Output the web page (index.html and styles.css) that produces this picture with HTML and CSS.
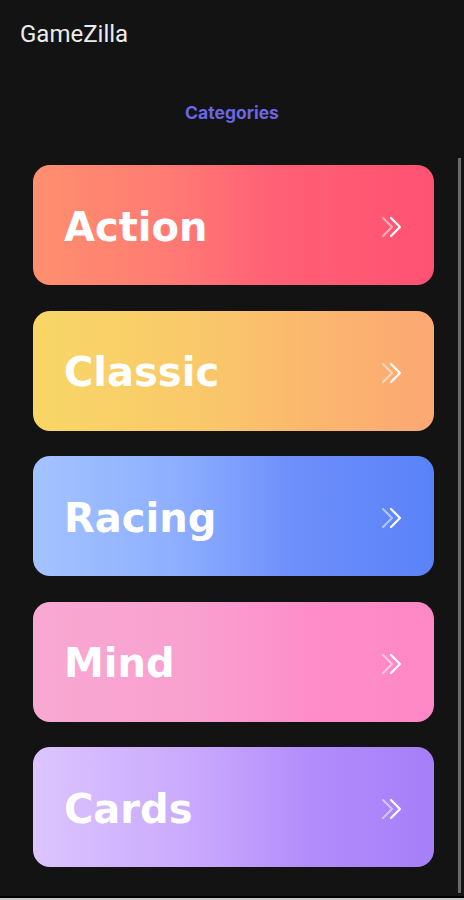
FILE: index.html
```html
<!DOCTYPE html>
<html lang="en">
<head>
<meta charset="utf-8">
<title>GameZilla</title>
<link rel="stylesheet" href="styles.css">
</head>
<body>
<div class="app">
  <header class="topbar">
    <h1 class="brand">GameZilla</h1>
  </header>
  <h2 class="section-title">Categories</h2>
  <main class="list">
    <div class="cards">
      <a class="card card-action" href="#">
        <span class="card-label">Action</span>
        <svg class="chev" viewBox="0 0 24 22" width="24" height="22"><polyline class="c1" points="2,2 11,11 2,20"/><polyline class="c2" points="10,2 19,11 10,20"/></svg>
      </a>
      <a class="card card-classic" href="#">
        <span class="card-label">Classic</span>
        <svg class="chev" viewBox="0 0 24 22" width="24" height="22"><polyline class="c1" points="2,2 11,11 2,20"/><polyline class="c2" points="10,2 19,11 10,20"/></svg>
      </a>
      <a class="card card-racing" href="#">
        <span class="card-label">Racing</span>
        <svg class="chev" viewBox="0 0 24 22" width="24" height="22"><polyline class="c1" points="2,2 11,11 2,20"/><polyline class="c2" points="10,2 19,11 10,20"/></svg>
      </a>
      <a class="card card-mind" href="#">
        <span class="card-label">Mind</span>
        <svg class="chev" viewBox="0 0 24 22" width="24" height="22"><polyline class="c1" points="2,2 11,11 2,20"/><polyline class="c2" points="10,2 19,11 10,20"/></svg>
      </a>
      <a class="card card-cards" href="#">
        <span class="card-label">Cards</span>
        <svg class="chev" viewBox="0 0 24 22" width="24" height="22"><polyline class="c1" points="2,2 11,11 2,20"/><polyline class="c2" points="10,2 19,11 10,20"/></svg>
      </a>
    </div>
    <div class="scroll-indicator"></div>
  </main>
  <div class="bottom-strip"></div>
</div>
</body>
</html>
```
FILE: styles.css
```css
* { box-sizing: border-box; }

html, body {
  margin: 0;
  padding: 0;
  background: #131313;
}

body {
  width: 464px;
  height: 900px;
  overflow: hidden;
}

.app {
  height: 900px;
  display: flex;
  flex-direction: column;
}

.topbar {
  padding: 20px 20px 0;
}

.brand {
  margin: 0;
  font-family: Roboto, "Noto Sans", sans-serif;
  font-weight: 400;
  font-size: 24px;
  line-height: 28px;
  color: #ececec;
}

.section-title {
  margin: 54px 0 34px;
  text-align: center;
  font-family: Inter, Roboto, sans-serif;
  font-weight: 700;
  font-size: 17.5px;
  line-height: 22px;
  color: #6c66e4;
}

.list {
  flex: 1;
  position: relative;
  padding-top: 7px;
}

.cards {
  display: flex;
  flex-direction: column;
  gap: 25.5px;
  margin-left: 33px;
  width: 401px;
}

.card {
  height: 120px;
  border-radius: 17px;
  display: flex;
  align-items: center;
  justify-content: space-between;
  padding: 3px 29px 0 31px;
  text-decoration: none;
}

.card-label {
  font-family: "DejaVu Sans", Verdana, sans-serif;
  font-weight: 700;
  font-size: 40px;
  color: #ffffff;
}

.chev {
  display: block;
  margin-top: 1px;
}

.chev polyline {
  fill: none;
  stroke: #ffffff;
  stroke-width: 2.2;
  stroke-linecap: round;
  stroke-linejoin: round;
}

.chev .c1 { opacity: 0.5; }

.card-action {
  background: linear-gradient(90deg, #fe906d 0%, #ff7a74 35%, #ff6075 60%, #ff5273 100%);
}

.card-classic {
  background: linear-gradient(90deg, #f8d766 0%, #f9c96a 40%, #fbb46f 75%, #fca873 100%);
}

.card-racing {
  background: linear-gradient(90deg, #a3c3ff 0%, #8eaffe 35%, #6d8ffb 65%, #5a82f8 100%);
}

.card-mind {
  background: linear-gradient(90deg, #f8a9d2 0%, #f9a0cf 40%, #fe8dc9 70%, #ff87c6 100%);
}

.card-cards {
  background: linear-gradient(90deg, #dcc4ff 0%, #c9a9fd 40%, #b28cfb 70%, #a67ff9 100%);
}

.scroll-indicator {
  position: absolute;
  top: 0;
  bottom: 3px;
  right: 3px;
  width: 3px;
  background: #6a6a6a;
}

.bottom-strip {
  height: 4px;
  border-top: 2px solid #000000;
  background: #c8c8c8;
}
```
